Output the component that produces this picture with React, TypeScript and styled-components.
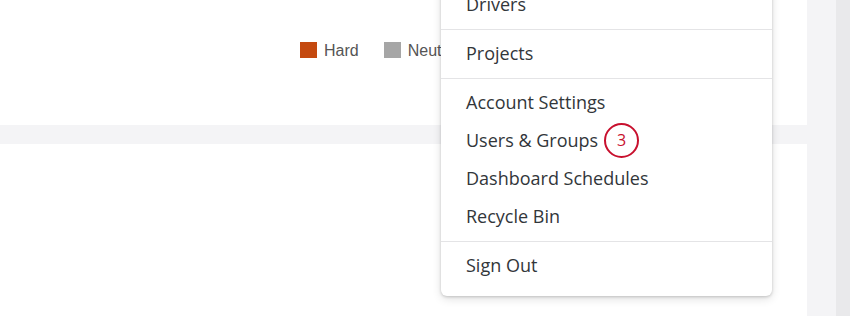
import React from 'react';
import styled, { createGlobalStyle } from 'styled-components';

const GlobalStyle = createGlobalStyle`
  html, body {
    margin: 0;
    padding: 0;
    background: #ffffff;
    font-family: "Open Sans", "Liberation Sans", sans-serif;
  }
`;

const Page = styled.div`
  position: relative;
  width: 850px;
  height: 316px;
  overflow: hidden;
  display: flex;
`;

const Main = styled.div`
  width: 807px;
  display: flex;
  flex-direction: column;
`;

const TopPanel = styled.div`
  height: 125px;
  background: #fff;
  display: flex;
  justify-content: flex-start;
  padding: 41px 0 0 300px;
  box-sizing: border-box;
`;

const Gap = styled.div`
  height: 19px;
  background: #f4f4f6;
`;

const BottomPanel = styled.div`
  flex: 1;
  background: #fff;
`;

const SideStrip = styled.div`
  width: 29px;
  background: #f4f4f6;
`;

const ScrollTrack = styled.div`
  width: 14px;
  background: #e9e9eb;
`;

const Legend = styled.div`
  display: flex;
  align-items: center;
  gap: 25px;
  height: 18px;
`;

const LegendItem = styled.div`
  display: flex;
  align-items: center;
  gap: 7px;
  font-family: "Liberation Sans", Arial, sans-serif;
  font-size: 16px;
  color: #555;
`;

const LegendLabel = styled.span`
  padding-top: 2px;
`;

const Swatch = styled.span<{ $color: string }>`
  width: 17px;
  height: 16px;
  background: ${(p) => p.$color};
`;

const Menu = styled.div`
  position: absolute;
  left: 441px;
  top: -19px;
  width: 331px;
  background: #fff;
  border-radius: 6px;
  box-shadow: 0 1px 3px rgba(0, 0, 0, 0.18), 0 3px 10px rgba(0, 0, 0, 0.12);
`;

const Group = styled.div<{ $last?: boolean }>`
  padding: 4px 0 ${(p) => (p.$last ? '12px' : '6px')};
  & + & {
    border-top: 1px solid #e4e4e6;
  }
`;

const Item = styled.div`
  height: 38px;
  display: flex;
  align-items: center;
  gap: 6px;
  padding-left: 25px;
  font-size: 18px;
  color: #32363a;
`;

const Badge = styled.span`
  width: 31px;
  height: 31px;
  border: 2px solid #c8102e;
  border-radius: 50%;
  display: flex;
  align-items: center;
  justify-content: center;
  color: #c8102e;
  font-size: 16px;
  background: #fff;
`;

export default function App() {
  return (
    <>
      <GlobalStyle />
      <Page>
        <Main>
          <TopPanel>
            <Legend>
              <LegendItem>
                <Swatch $color="#c4490f" />
                <LegendLabel>Hard</LegendLabel>
              </LegendItem>
              <LegendItem>
                <Swatch $color="#a6a6a6" />
                <LegendLabel>Neutral</LegendLabel>
              </LegendItem>
            </Legend>
          </TopPanel>
          <Gap />
          <BottomPanel />
        </Main>
        <SideStrip />
        <ScrollTrack />
        <Menu>
          <Group>
            <Item>Drivers</Item>
          </Group>
          <Group>
            <Item>Projects</Item>
          </Group>
          <Group>
            <Item>Account Settings</Item>
            <Item>
              Users &amp; Groups
              <Badge>3</Badge>
            </Item>
            <Item>Dashboard Schedules</Item>
            <Item>Recycle Bin</Item>
          </Group>
          <Group $last>
            <Item>Sign Out</Item>
          </Group>
        </Menu>
      </Page>
    </>
  );
}
